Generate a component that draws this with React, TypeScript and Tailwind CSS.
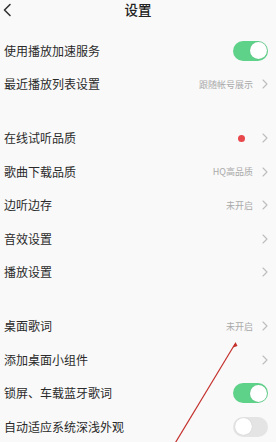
import React from "react";

type Row = {
  label: string;
  value?: string;
  toggle?: boolean;
  on?: boolean;
  dot?: boolean;
};

const groups: Row[][] = [
  [
    { label: "使用播放加速服务", toggle: true, on: true },
    { label: "最近播放列表设置", value: "跟随帐号展示" },
  ],
  [
    { label: "在线试听品质", dot: true },
    { label: "歌曲下载品质", value: "HQ高品质" },
    { label: "边听边存", value: "未开启" },
    { label: "音效设置" },
    { label: "播放设置" },
  ],
  [
    { label: "桌面歌词", value: "未开启" },
    { label: "添加桌面小组件" },
    { label: "锁屏、车载蓝牙歌词", toggle: true, on: true },
    { label: "自动适应系统深浅外观", toggle: true, on: false },
  ],
];

const Chevron = () => (
  <svg width="6" height="10" viewBox="0 0 6 10" className="shrink-0">
    <path d="M1 1 L5 5 L1 9" fill="none" stroke="#bdbdbd" strokeWidth="1.1" strokeLinecap="round" strokeLinejoin="round" />
  </svg>
);

const Toggle = ({ on }: { on?: boolean }) => (
  <div
    className={`w-[35px] h-[20px] rounded-full flex items-center px-[1.5px] ${
      on ? "bg-[#5fd28a] justify-end" : "bg-[#e4e4e4] justify-start"
    }`}
  >
    <div className="w-[17px] h-[17px] rounded-full bg-white shadow-[0_0_1px_rgba(0,0,0,0.2)]" />
  </div>
);

const SettingRow = ({ row }: { row: Row }) => (
  <div className="h-[33.5px] flex items-center justify-between pl-[4px] pr-[8px]">
    <span className="text-[12px] text-[#2a2a2a]">{row.label}</span>
    {row.toggle ? (
      <Toggle on={row.on} />
    ) : (
      <div className="flex items-center">
        {row.dot && <div className="w-[7px] h-[7px] rounded-full bg-[#e8484c] mr-[17px]" />}
        {row.value && <span className="text-[9px] text-[#a9a9a9] mr-[9px]">{row.value}</span>}
        <Chevron />
      </div>
    )}
  </div>
);

export default function App() {
  return (
    <div
      className="relative w-[276px] h-[442px] overflow-hidden bg-[#f9f9f9]"
      style={{ fontFamily: '"Noto Sans CJK SC", "Noto Sans", sans-serif' }}
    >
      <div className="relative h-[18px] flex items-center justify-center">
        <svg width="10" height="14" viewBox="0 0 10 14" className="absolute left-[2px] top-[3px]">
          <path d="M8 1.5 L2.5 7 L8 12.5" fill="none" stroke="#333" strokeWidth="1.6" strokeLinecap="round" strokeLinejoin="round" />
        </svg>
        <span className="text-[13.5px] text-[#222] font-medium">设置</span>
      </div>

      <div className="mt-[16px] flex flex-col gap-[20.5px]">
        {groups.map((g, i) => (
          <div key={i}>
            {g.map((r) => (
              <SettingRow key={r.label} row={r} />
            ))}
          </div>
        ))}
      </div>

      <svg className="absolute inset-0 pointer-events-none" width="276" height="442" viewBox="0 0 276 442">
        <line x1="235" y1="344" x2="174" y2="445" stroke="#c4302c" strokeWidth="1.2" />
        <path d="M235.5 342 L233 347.5 L237.5 346 Z" fill="#c4302c" />
      </svg>
    </div>
  );
}
